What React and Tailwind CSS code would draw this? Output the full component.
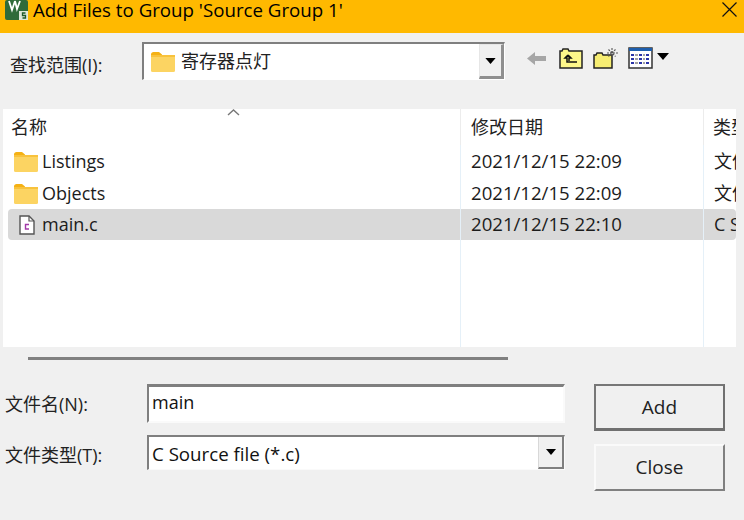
import React from 'react';

const ui = { fontFamily: '"Open Sans", "Noto Sans CJK SC", sans-serif' };

function FolderIcon({ className }) {
  return (
    <svg className={className} viewBox="0 0 24 20">
      <path d="M0 2.5C0 1 1 0 2.5 0H8l3 2.5v3H0z" fill="#f5b114" />
      <rect x="0" y="3" width="24" height="17" rx="1.5" fill="#fcd462" />
      <rect x="0" y="3" width="24" height="2" fill="#f8c23c" />
    </svg>
  );
}

function DropArrow({ className }) {
  return (
    <svg className={className} viewBox="0 0 12 7">
      <path d="M0 0h12L6 7z" fill="#000" />
    </svg>
  );
}

function Row({ name, date, type, icon, selected, tall }) {
  return (
    <div className={`ml-[5px] flex items-center text-[#1c1c1c] ${tall ? 'h-[32px] pt-[1px]' : 'h-[31px]'} ${selected ? 'rounded-sm bg-[#d9d9d9]' : ''}`}>
      <div className="flex w-[453px] items-center pl-[6px] text-[18px]">
        <div className="flex w-[28px] shrink-0 items-center">{icon}</div>
        <span>{name}</span>
      </div>
      <div className="w-[243px] whitespace-nowrap pb-[2px] pl-[10px] text-[18.6px]">{date}</div>
      <div className="min-w-0 flex-1 overflow-hidden whitespace-nowrap pl-[10px] text-[18px]">{type}</div>
    </div>
  );
}

export default function App() {
  const folder = <FolderIcon className="h-[20px] w-[24px]" />;
  const cFile = (
    <svg className="ml-[5px] h-[20px] w-[16px]" viewBox="0 0 16 20" fill="none">
      <path d="M1 1h9l5 5v13H1z" fill="#fff" stroke="#555" strokeWidth="1.4" />
      <path d="M10 1v5h5" stroke="#555" strokeWidth="1.2" />
      <path d="M10 9.5H6.5v4.5H10" stroke="#a23aa8" strokeWidth="1.4" />
    </svg>
  );

  return (
    <div className="flex h-[520px] w-[744px] flex-col overflow-hidden bg-[#f0f0f0]" style={ui}>
      {/* title bar */}
      <div className="flex h-[33px] shrink-0 items-start justify-between bg-[#ffb900] pl-[5px] pr-[7px]">
        <div className="flex items-start">
          <svg className="h-[20px] w-[23px]" viewBox="0 0 23 20">
            <rect width="23" height="20" rx="2" fill="#2f6b3a" />
            <path d="M4 1l3 9 3-9M10 1l2 8 3-8" stroke="#fff" strokeWidth="1.8" fill="none" />
            <rect x="14" y="11" width="9" height="9" fill="#dfe8da" />
            <path d="M20.5 13h-3v2.5h3V18h-3" stroke="#1f5a2c" strokeWidth="1.3" fill="none" />
          </svg>
          <span className="ml-[5px] text-[18.7px] leading-[19px] whitespace-nowrap text-black">Add Files to Group 'Source Group 1'</span>
        </div>
        <svg className="mt-[2px] h-[15px] w-[15px]" viewBox="0 0 15 15">
          <path d="M0.5 0.5l14 14M14.5 0.5l-14 14" stroke="#111" strokeWidth="1.2" />
        </svg>
      </div>

      {/* look-in toolbar */}
      <div className="flex h-[76px] shrink-0 items-start pl-[10px] pt-[9px]">
        <label className="mt-[12px] w-[132px] text-[18px] leading-[23px] text-[#222]">查找范围(I):</label>
        <div className="flex h-[38px] w-[363px] border-t-[2px] border-l-[2px] border-b border-r border-t-[#7f7f7f] border-l-[#7f7f7f] border-b-white border-r-white bg-white">
          <div className="flex flex-1 items-center pl-[7px]">
            <FolderIcon className="h-[20px] w-[24px]" />
            <span className="ml-[6px] text-[18px] text-[#222]">寄存器点灯</span>
          </div>
          <div className="flex w-[25px] items-center justify-center border-b-[3px] border-r-[3px] border-l border-t border-b-[#8f8f8f] border-r-[#8f8f8f] border-l-[#e6e6e6] border-t-[#e6e6e6] bg-[#f0f0f0]">
            <DropArrow className="h-[6px] w-[11px]" />
          </div>
        </div>
        <div className="ml-[22px] mt-[5px] flex items-center">
          <svg className="h-[15px] w-[20px]" viewBox="0 0 20 15">
            <path d="M0 7.5L8 1v4h11v5H8v4z" fill="#a6a6a6" />
          </svg>
          <svg className="ml-[12px] h-[21px] w-[24px]" viewBox="0 0 24 21">
            <path d="M1 20V3h2l1-2h5l1 2h13v17z" fill="#fdf78a" stroke="#222" strokeWidth="1.5" />
            <path d="M9 7l-3 3h2v4h10M9 7l3 3h-2v3" stroke="#111" strokeWidth="1.5" fill="none" />
          </svg>
          <svg className="ml-[10px] mt-[-1px] h-[23px] w-[26px]" viewBox="0 0 26 23">
            <path d="M1 22V9h2l1-2h5l1 2h9v13z" fill="#f6ed72" stroke="#222" strokeWidth="1.5" />
            <path d="M19 2v10M14 7h11M15.5 3.5l7 7M22.5 3.5l-7 7" stroke="#555" strokeWidth="1.1" strokeDasharray="2 1" />
          </svg>
          <svg className="ml-[9px] h-[22px] w-[25px]" viewBox="0 0 25 22">
            <rect x="1" y="1" width="23" height="20" fill="#fff" stroke="#333" strokeWidth="1.5" />
            <rect x="1" y="1" width="23" height="3" fill="#1f5fae" />
            <path d="M3 7h3v2H3zM3 11h3v2H3zM3 15h3v2H3zM11 7h3v2h-3zM11 11h3v2h-3zM11 15h3v2h-3zM18 7h3v2h-3zM18 11h3v2h-3zM18 15h3v2h-3z" fill="#2a34a8" />
            <path d="M7 8h3M7 12h3M7 16h3M15 8h2M15 12h2M15 16h2" stroke="#444" strokeWidth="1" />
          </svg>
          <DropArrow className="ml-[3px] mt-[-4px] h-[7px] w-[14px]" />
        </div>
      </div>

      {/* file list */}
      <div className="relative ml-[3px] mr-[8px] h-[238px] shrink-0 overflow-hidden bg-white">
        <div className="flex h-[37px] items-center text-[18px] text-[#222]">
          <div className="relative w-[458px] pl-[8px]">
            名称
            <svg className="absolute left-[224px] top-[-5px] h-[7px] w-[13px]" viewBox="0 0 13 7">
              <path d="M1 6l5.5-5L12 6" stroke="#777" strokeWidth="1.4" fill="none" />
            </svg>
          </div>
          <div className="w-[243px] pl-[10px]">修改日期</div>
          <div className="flex-1 overflow-hidden whitespace-nowrap pl-[9px]">类型</div>
        </div>
        <Row name="Listings" date="2021/12/15 22:09" type="文件夹" icon={folder} />
        <Row name="Objects" date="2021/12/15 22:09" type="文件夹" icon={folder} tall />
        <Row name="main.c" date="2021/12/15 22:10" type="C Source" icon={cFile} selected />
        <div className="absolute left-[457px] top-0 h-[36px] w-px bg-[#ececec]" />
        <div className="absolute left-[700px] top-0 h-[36px] w-px bg-[#ececec]" />
        <div className="absolute bottom-0 left-[457px] top-[36px] w-px bg-[#e5f0f8]" />
        <div className="absolute bottom-0 left-[700px] top-[36px] w-px bg-[#e5f0f8]" />
      </div>

      {/* horizontal scrollbar */}
      <div className="ml-[28px] mt-[10px] h-[3px] w-[480px] shrink-0 bg-[#808080]" />

      {/* name and type fields, buttons */}
      <div className="mt-[24px] flex pl-[5px]">
        <div className="w-[560px]">
          <div className="flex items-start">
            <label className="mt-[8px] w-[142px] text-[18px] leading-[24px] text-[#222]">文件名(N):</label>
            <div className="h-[39px] w-[418px] border-t-[3px] border-l-[2px] border-b-[2px] border-r-[2px] border-t-[#7f7f7f] border-l-[#7f7f7f] border-b-[#fafafa] border-r-[#fafafa] bg-white pl-[3px] pt-[2px] text-[18px] leading-[26px] text-[#111]">
              main
            </div>
          </div>
          <div className="mt-[12px] flex items-start">
            <label className="mt-[8px] w-[142px] text-[18px] leading-[24px] text-[#222]">文件类型(T):</label>
            <div className="flex h-[35px] w-[418px] border-t-[2px] border-l-[2px] border-b border-r border-t-[#7f7f7f] border-l-[#7f7f7f] border-b-[#fafafa] border-r-[#fafafa] bg-white">
              <div className="flex-1 whitespace-nowrap pl-[3px] pt-[2px] text-[18.7px] leading-[30px] text-[#111]">C Source file (*.c)</div>
              <div className="flex w-[26px] items-center justify-center border-b-[2px] border-r-[2px] border-l border-b-[#7f7f7f] border-r-[#7f7f7f] border-l-[#d8d8d8] bg-[#f0f0f0]">
                <DropArrow className="h-[6px] w-[10px]" />
              </div>
            </div>
          </div>
        </div>
        <div className="ml-[29px] flex w-[131px] flex-col">
          <button className="h-[47px] border-2 border-b-[3px] border-t-[#777] border-l-[#777] border-r-[#707070] border-b-[#707070] bg-[#f0f0f0] text-[19px] text-[#222]">Add</button>
          <button className="mt-[13px] h-[47px] border-2 border-t-[#fafafa] border-l-[#fafafa] border-r-[#808080] border-b-[#808080] bg-[#f0f0f0] text-[19px] text-[#222]">Close</button>
        </div>
      </div>
    </div>
  );
}
